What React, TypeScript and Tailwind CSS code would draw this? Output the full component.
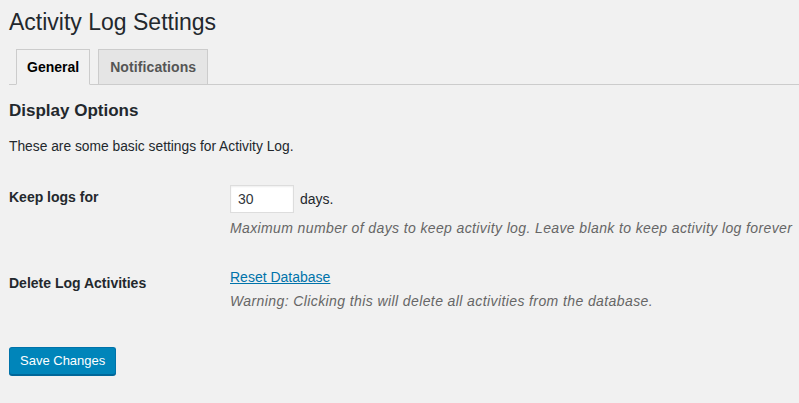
export default function App() {
  return (
    <div
      className="min-h-screen w-full bg-[#f1f1f1] pl-[9px] text-[#23282d]"
      style={{ fontFamily: '"Liberation Sans", Arial, sans-serif' }}
    >
      <h1 className="pt-[7px] text-[23px] leading-[30px] font-normal">
        Activity Log Settings
      </h1>

      {/* Tabs */}
      <div className="mt-[12px] flex border-b border-[#cccccc]">
        <div className="-mb-px ml-[7px] border border-[#cccccc] border-b-[#f1f1f1] bg-[#f1f1f1] px-[10px] py-[5px] text-[14px] leading-[24px] font-bold text-black">
          General
        </div>
        <div className="-mb-px ml-[8px] border border-[#cccccc] bg-[#e5e5e5] px-[11px] py-[5px] text-[14px] leading-[24px] tracking-[0.1px] font-bold text-[#555555]">
          Notifications
        </div>
      </div>

      <h2 className="mt-[15px] text-[17px] leading-[22px] font-bold">
        Display Options
      </h2>
      <p className="mt-[15px] text-[13.8px] leading-[20px]">
        These are some basic settings for Activity Log.
      </p>

      {/* Keep logs row */}
      <div className="mt-[28px] flex items-start">
        <div className="w-[221px] shrink-0 pt-[2px] text-[14px] leading-[20px] font-bold">
          Keep logs for
        </div>
        <div className="flex flex-col">
          <div className="flex items-center">
            <input
              type="text"
              defaultValue="30"
              className="h-[28px] w-[64px] border border-[#dddddd] bg-white px-[7px] text-[14px] text-[#32373c] shadow-[inset_0_1px_2px_rgba(0,0,0,0.07)] outline-none"
            />
            <span className="ml-[6px] text-[14px] leading-[20px]">days.</span>
          </div>
          <p className="mt-[5px] text-[14px] leading-[20px] tracking-[0.38px] whitespace-nowrap text-[#666666] italic">
            Maximum number of days to keep activity log. Leave blank to keep activity log forever
          </p>
        </div>
      </div>

      {/* Delete row */}
      <div className="mt-[29px] flex items-start">
        <div className="w-[221px] shrink-0 pt-[6px] text-[14px] leading-[20px] font-bold">
          Delete Log Activities
        </div>
        <div className="flex flex-col">
          <a href="#" className="self-start text-[14px] leading-[20px] text-[#0073aa] underline">
            Reset Database
          </a>
          <p className="mt-[4px] text-[14px] leading-[20px] tracking-[0.4px] whitespace-nowrap text-[#666666] italic">
            Warning: Clicking this will delete all activities from the database.
          </p>
        </div>
      </div>

      <button className="mt-[36px] h-[28px] rounded-[3px] border border-[#0073aa] border-b-[#006799] bg-[#0085ba] px-[10px] text-[13px] leading-[26px] text-white shadow-[0_1px_0_#006799]">
        Save Changes
      </button>
    </div>
  );
}
